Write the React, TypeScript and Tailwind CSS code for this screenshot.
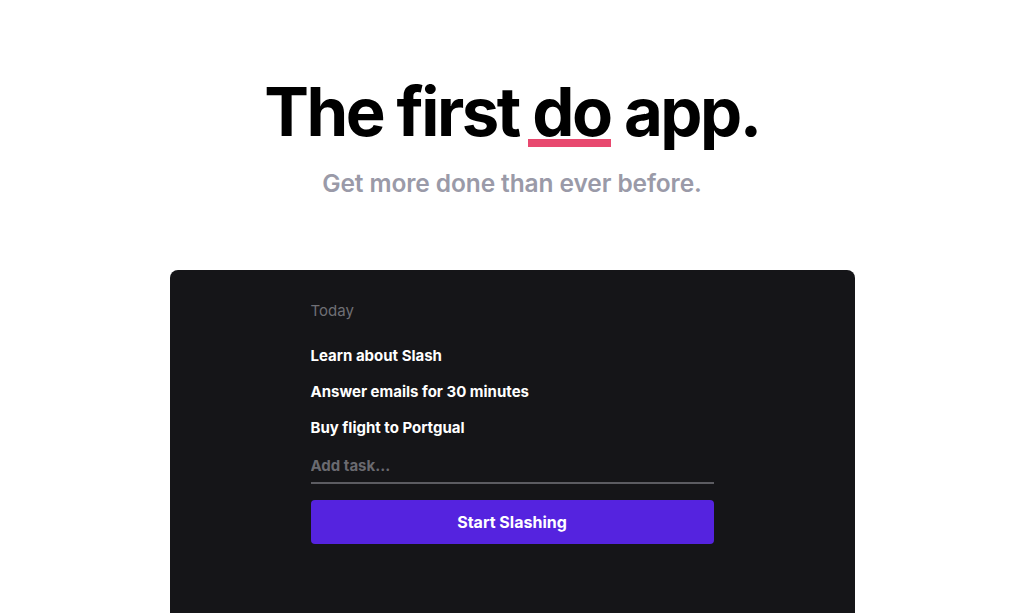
export default function App() {
  const tasks = ["Learn about Slash", "Answer emails for 30 minutes", "Buy flight to Portgual"];

  return (
    <div className="h-[613px] w-full overflow-hidden bg-white font-['Inter',sans-serif]">
      {/* Hero */}
      <div className="flex flex-col items-center pt-[71px]">
        <h1 className="text-[67px] font-bold leading-[82px] tracking-[-2.5px] text-black">
          The first{" "}
          <span className="relative inline-block">
            do
            <span className="absolute left-[-4px] right-[0px] top-[68px] h-[8px] bg-[#e8496f]" />
          </span>{" "}
          app.
        </h1>
        <p className="mt-[12px] text-[24.5px] font-semibold tracking-[-0.1px] text-[#9a9aa8]">
          Get more done than ever before.
        </p>
      </div>

      {/* Demo card */}
      <div className="mx-auto mt-[68px] h-[400px] w-[685px] rounded-[8px] bg-[#151518] pt-[31px]">
        <div className="mx-auto w-[403px]">
          <div className="text-[15px] leading-[20px] text-[#6f6f75]">Today</div>
          <ul className="mt-[25px] flex flex-col gap-[16px]">
            {tasks.map((t) => (
              <li key={t} className="text-[15px] font-bold leading-[20px] text-white">
                {t}
              </li>
            ))}
          </ul>
          <input
            placeholder="Add task..."
            className="mt-[18px] w-full border-b-2 border-[#5c5c62] bg-transparent pb-[6px] text-[15px] font-bold leading-[20px] text-white outline-none placeholder:text-[#6a6a70]"
          />
          <button className="mt-[16px] flex h-[44px] w-full items-center justify-center rounded-[4px] bg-[#5523df] text-[16px] font-bold text-white">
            Start Slashing
          </button>
        </div>
      </div>
    </div>
  );
}
